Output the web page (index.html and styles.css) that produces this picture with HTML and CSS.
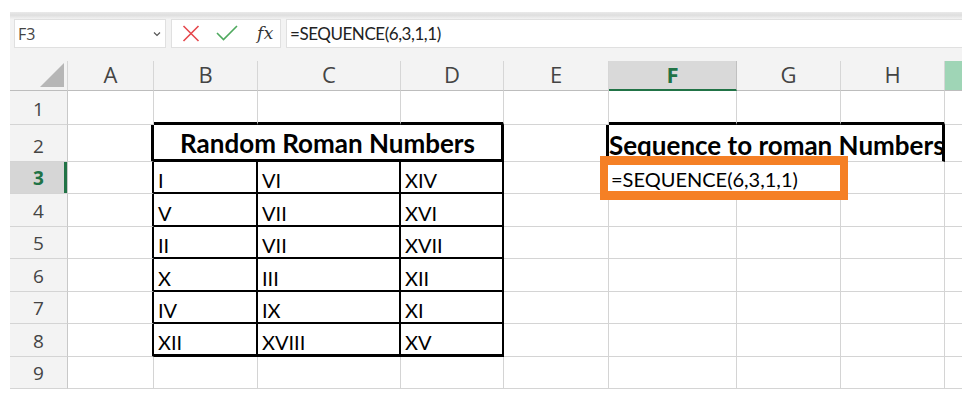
FILE: index.html
```html
<!DOCTYPE html>
<html>
<head>
<meta charset="utf-8">
<link rel="stylesheet" href="styles.css">
</head>
<body>
<div class="app">
  <div class="band"></div>
  <div class="fbar">
    <div class="namebox">
      <span class="name">F3</span>
      <svg class="chev" width="8" height="6" viewBox="0 0 8 6"><path d="M1 1.5 L4 4.5 L7 1.5" fill="none" stroke="#555" stroke-width="1.2"/></svg>
    </div>
    <div class="fnbox">
      <svg class="ico" width="18" height="17" viewBox="0 0 18 17"><path d="M1.5 1 L16.5 16 M16.5 1 L1.5 16" stroke="#e5484d" stroke-width="1.6" fill="none"/></svg>
      <svg class="ico" width="22" height="16" viewBox="0 0 22 16"><path d="M1 8 L7.5 14.5 L21 1" stroke="#4fa95e" stroke-width="1.6" fill="none"/></svg>
      <span class="fx">fx</span>
    </div>
    <div class="formula">=SEQUENCE(6,3,1,1)</div>
  </div>
  <div class="gap"></div>
  <div class="sheet">
    <!-- header row -->
    <div class="corner"><svg width="58" height="30" viewBox="0 0 58 30"><polygon points="54,2 54,26 30,26" fill="#b6b6b6"/></svg></div>
    <div class="ch">A</div>
    <div class="ch">B</div>
    <div class="ch">C</div>
    <div class="ch">D</div>
    <div class="ch">E</div>
    <div class="ch sel">F</div>
    <div class="ch">G</div>
    <div class="ch">H</div>
    <div class="ch green"></div>

    <!-- row 1 -->
    <div class="rh">1</div>
    <div class="c"></div>
    <div class="c tt"></div>
    <div class="c tt"></div>
    <div class="c tt"></div>
    <div class="c"></div>
    <div class="c tt"></div>
    <div class="c tt"></div>
    <div class="c tt"></div>
    <div class="c last"></div>

    <!-- row 2 -->
    <div class="rh">2</div>
    <div class="c tl3"></div>
    <div class="c thead">Random Roman Numbers</div>
    <div class="c tl3"></div>
    <div class="c shead">Sequence to roman Numbers</div>
    <div class="c last"></div>

    <!-- row 3 -->
    <div class="rh rsel">3</div>
    <div class="c tl"></div>
    <div class="c tb">I</div>
    <div class="c tb">VI</div>
    <div class="c tb">XIV</div>
    <div class="c"></div>
    <div class="c"></div>
    <div class="c"></div>
    <div class="c"></div>
    <div class="c last"></div>

    <!-- row 4 -->
    <div class="rh">4</div>
    <div class="c tl"></div>
    <div class="c tb">V</div>
    <div class="c tb">VII</div>
    <div class="c tb">XVI</div>
    <div class="c"></div>
    <div class="c"></div>
    <div class="c"></div>
    <div class="c"></div>
    <div class="c last"></div>

    <!-- row 5 -->
    <div class="rh">5</div>
    <div class="c tl"></div>
    <div class="c tb">II</div>
    <div class="c tb">VII</div>
    <div class="c tb">XVII</div>
    <div class="c"></div>
    <div class="c"></div>
    <div class="c"></div>
    <div class="c"></div>
    <div class="c last"></div>

    <!-- row 6 -->
    <div class="rh">6</div>
    <div class="c tl"></div>
    <div class="c tb">X</div>
    <div class="c tb">III</div>
    <div class="c tb">XII</div>
    <div class="c"></div>
    <div class="c"></div>
    <div class="c"></div>
    <div class="c"></div>
    <div class="c last"></div>

    <!-- row 7 -->
    <div class="rh">7</div>
    <div class="c tl"></div>
    <div class="c tb">IV</div>
    <div class="c tb">IX</div>
    <div class="c tb">XI</div>
    <div class="c"></div>
    <div class="c"></div>
    <div class="c"></div>
    <div class="c"></div>
    <div class="c last"></div>

    <!-- row 8 -->
    <div class="rh">8</div>
    <div class="c tl"></div>
    <div class="c tb tbot">XII</div>
    <div class="c tb tbot">XVIII</div>
    <div class="c tb tbot">XV</div>
    <div class="c"></div>
    <div class="c"></div>
    <div class="c"></div>
    <div class="c"></div>
    <div class="c last"></div>

    <!-- row 9 -->
    <div class="rh">9</div>
    <div class="c"></div>
    <div class="c"></div>
    <div class="c"></div>
    <div class="c"></div>
    <div class="c"></div>
    <div class="c"></div>
    <div class="c"></div>
    <div class="c"></div>
    <div class="c last"></div>

    <div class="active">=SEQUENCE(6,3,1,1)</div>
  </div>
</div>
</body>
</html>
```

FILE: styles.css
```css
* { box-sizing: border-box; }
html, body { margin: 0; padding: 0; background: #fff; }
body { width: 962px; height: 404px; overflow: hidden; }

.app {
  margin-left: 10px;
  padding-top: 12px;
}

.band {
  height: 7px;
  background: linear-gradient(#e9e9e9, #dedede 45%, #ebebeb 80%, #f2f2f2);
}

.fbar {
  height: 29px;
  background: #f3f3f3;
  display: flex;
  padding-left: 4px;
  gap: 5px;
}

.namebox {
  width: 152px;
  background: #fff;
  border: 1px solid #e0e0e0;
  display: flex;
  align-items: center;
  justify-content: space-between;
  padding: 0 4px 0 3px;
}
.name {
  font-family: "Open Sans", "Noto Sans", sans-serif;
  font-size: 16px;
  color: #444;
  line-height: 1;
}
.chev { margin-top: 1px; }

.fnbox {
  width: 110px;
  background: #fff;
  border: 1px solid #e0e0e0;
  display: flex;
  align-items: center;
  padding-left: 10px;
}
.fnbox .ico:first-child { margin-right: 17px; }
.fnbox .ico:nth-child(2) { margin-right: 19px; margin-top: -1px; margin-left: -1px; }
.fx {
  font-family: "DejaVu Serif", "Liberation Serif", serif;
  font-style: italic;
  font-size: 17px;
  letter-spacing: 0.5px;
  color: #333;
  line-height: 1;
}

.formula {
  flex: 1;
  background: #fff;
  border: 1px solid #e0e0e0;
  border-right: none;
  font-family: "Lato", sans-serif;
  font-size: 17px;
  letter-spacing: -0.45px;
  color: #222;
  display: flex;
  align-items: center;
  padding-left: 3px;
  line-height: 1;
}

.gap { height: 13px; background: #f3f3f3; }

.sheet {
  position: relative;
  display: grid;
  grid-template-columns: 58px 86px 104px 143px 103px 105px 128px 104px 104px 1fr;
  grid-template-rows: 30px 34px 37px 32px 33px 32px 33px 32px 33px 32px;
}

.corner {
  background: #f3f3f3;
  border-right: 1px solid #d6d6d6;
  border-bottom: 1px solid #bdbdbd;
}
.corner svg { display: block; }

.ch {
  background: #f3f3f3;
  border-right: 1px solid #d6d6d6;
  border-bottom: 1px solid #bdbdbd;
  font-family: "Open Sans", "Noto Sans", sans-serif;
  font-size: 22px;
  color: #444;
  display: flex;
  align-items: center;
  justify-content: center;
  line-height: 1;
  padding-bottom: 3px;
}
.ch.sel {
  background: #d9d9d9;
  color: #217346;
  font-weight: 700;
  border-right-color: #c0c0c0;
  border-bottom: 2px solid #217346;
  padding-bottom: 2px;
}
.ch.green {
  background: #9fd5b6;
  border-right: none;
}

.rh {
  background: #f3f3f3;
  border-right: 1px solid #c8c8c8;
  border-bottom: 1px solid #d4d4d4;
  font-family: "Open Sans", "Noto Sans", sans-serif;
  font-size: 19px;
  color: #444;
  display: flex;
  align-items: flex-end;
  justify-content: center;
  line-height: 19px;
  padding-bottom: 5px;
}
.rh.rsel {
  background: #d6d6d6;
  color: #217346;
  font-weight: 700;
  box-shadow: inset -3px 0 0 #217346;
}

.c {
  border-right: 1px solid #d4d4d4;
  border-bottom: 1px solid #d4d4d4;
  font-family: "Lato", "Carlito", sans-serif;
  font-size: 20px;
  line-height: 20px;
  color: #000;
  display: flex;
  align-items: flex-end;
  padding: 0 0 2px 4px;
  white-space: nowrap;
}
.c.last { border-right: none; }

.c.tt { border-bottom: 3px solid #000; }
.c.tl3 { border-right: 3px solid #000; }
.c.tl { border-right: 2px solid #000; }
.c.tb {
  border-right: 2px solid #000;
  border-bottom: 2px solid #000;
}
.c.tbot { border-bottom: 3px solid #000; }

.c.thead {
  grid-column: span 3;
  border-right: 3px solid #000;
  border-bottom: 3px solid #000;
  justify-content: center;
  font-weight: 700;
  font-size: 26px;
  line-height: 26px;
  padding: 0 0 3px 0;
}
.c.shead {
  grid-column: span 3;
  border-right: 3px solid #000;
  font-weight: 700;
  font-size: 26px;
  line-height: 26px;
  padding: 0 0 3px 0;
  overflow: visible;
}

.active {
  position: absolute;
  left: 590px;
  top: 95px;
  width: 248px;
  height: 44px;
  border: 8px solid #f58025;
  border-top-width: 9px;
  border-bottom-width: 9px;
  background: #fff;
  font-family: "Lato", "Carlito", sans-serif;
  font-size: 20px;
  line-height: 20px;
  color: #000;
  display: flex;
  align-items: flex-end;
  padding: 0 0 2px 3px;
  white-space: nowrap;
}
```
